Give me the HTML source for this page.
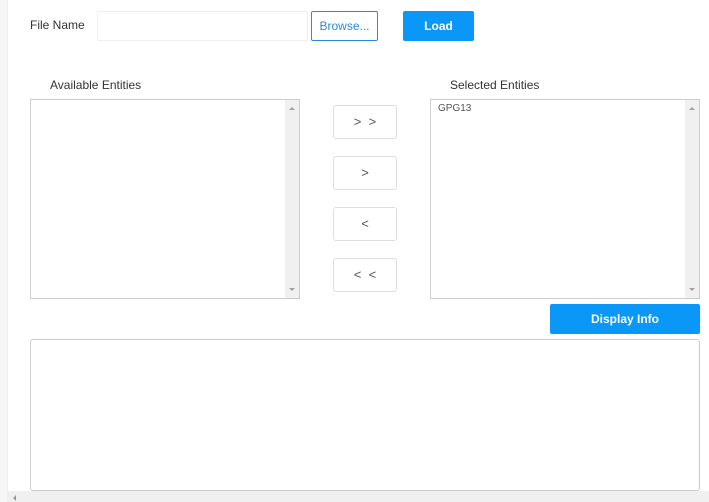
<!DOCTYPE html>
<html><head><style>
body{margin:0;width:709px;height:502px;background:#fff;position:relative;overflow:hidden;font-family:"Liberation Sans",sans-serif;color:#333}
.a{position:absolute;box-sizing:border-box}
.lb{font-size:12px;color:#333}
.list{border:1px solid #ccc;background:#fff}
.sb{position:absolute;right:0;top:0;bottom:0;width:14px;background:#f0f0f0}
.up,.dn{position:absolute;left:4px;width:0;height:0;border-left:3px solid transparent;border-right:3px solid transparent}
.up{top:7px;border-bottom:3px solid #a0a0a0}
.dn{bottom:7px;border-top:3px solid #a0a0a0}
.mv{border:1px solid #ddd;border-radius:3px;background:#fff;width:64px;height:34px;left:333px;text-align:center;line-height:32px;font-size:13px;color:#555}
.blue{background:#0a97f7;color:#fff;font-weight:bold;font-size:12px;text-align:center;border-radius:2px}
</style></head><body>
<div class="a" style="left:0;top:0;width:8px;height:502px;background:#f5f5f5;border-right:1px solid #eee"></div>
<div class="a lb" style="left:30px;top:18px">File Name</div>
<div class="a" style="left:97px;top:11px;width:211px;height:30px;border:1px solid #eee;border-radius:2px"></div>
<div class="a" style="left:311px;top:11px;width:67px;height:30px;border:1px solid #2a8ad6;border-radius:2px;color:#2a8ad6;font-size:12px;text-align:center;line-height:28px">Browse...</div>
<div class="a blue" style="left:403px;top:11px;width:71px;height:30px;line-height:30px">Load</div>
<div class="a lb" style="left:50px;top:78px">Available Entities</div>
<div class="a lb" style="left:450px;top:78px">Selected Entities</div>
<div class="a list" style="left:30px;top:99px;width:270px;height:200px"><div class="sb"><div class="up"></div><div class="dn"></div></div></div>
<div class="a list" style="left:430px;top:99px;width:270px;height:200px"><div style="position:absolute;left:7px;top:3px;font-size:10px;color:#555">GPG13</div><div class="sb"><div class="up"></div><div class="dn"></div></div></div>
<div class="a mv" style="top:105px">&gt;&nbsp;&nbsp;&gt;</div>
<div class="a mv" style="top:156px">&gt;</div>
<div class="a mv" style="top:207px">&lt;</div>
<div class="a mv" style="top:258px">&lt;&nbsp;&nbsp;&lt;</div>
<div class="a blue" style="left:550px;top:304px;width:150px;height:30px;line-height:30px">Display Info</div>
<div class="a" style="left:30px;top:339px;width:670px;height:152px;border:1px solid #ccc;border-radius:3px;background:#fff"></div>
<div class="a" style="left:8px;top:491px;width:701px;height:11px;background:#f0f0f0"></div>
<div class="a" style="left:13px;top:495px;width:0;height:0;border-top:3px solid transparent;border-bottom:3px solid transparent;border-right:3px solid #999"></div>
</body></html>
